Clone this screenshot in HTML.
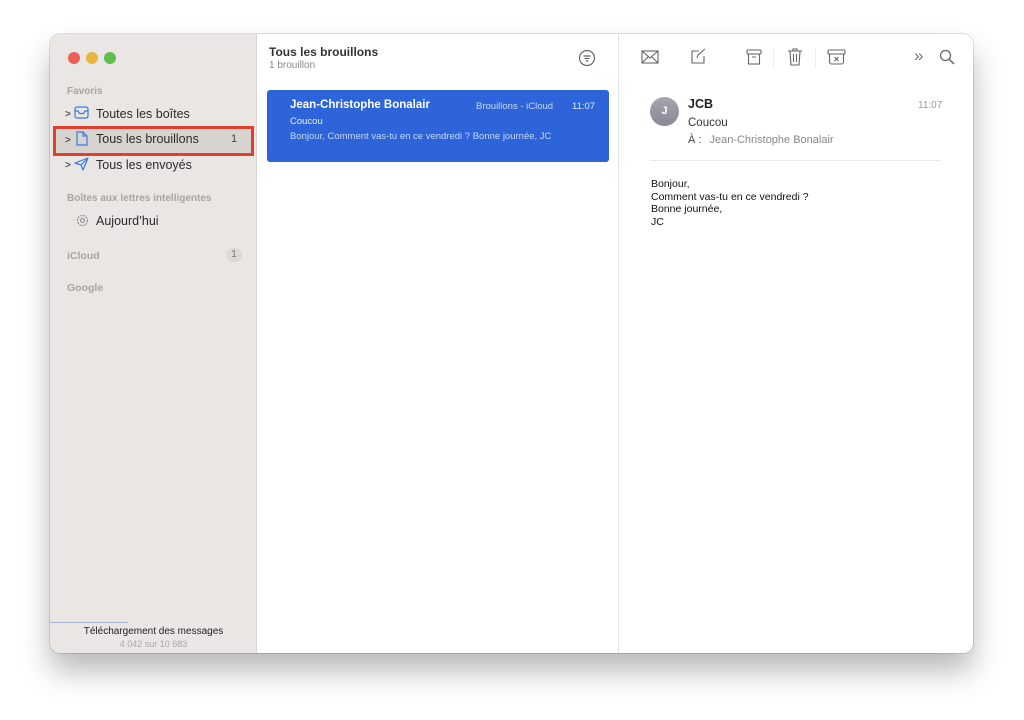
<!DOCTYPE html>
<html><head><meta charset="utf-8"><style>
*{box-sizing:border-box;margin:0;padding:0}
body{width:1024px;height:720px;background:#fff;font-family:"Liberation Sans",sans-serif;position:relative;overflow:hidden}
.win{position:absolute;left:50px;top:34px;width:923px;height:619px;border-radius:10px;background:#fff;box-shadow:0 18px 30px rgba(0,0,0,.28),0 0 0 1px rgba(0,0,0,.12);overflow:hidden}
.side{position:absolute;left:0;top:0;width:207px;height:619px;background:#e9e6e3;border-right:1px solid #d8d6d3}
.mid{position:absolute;left:207px;top:0;width:362px;height:619px;background:#fff;border-right:1px solid #e2e2e2}
.right{position:absolute;left:569px;top:0;width:354px;height:619px;background:#fff}
.dot{position:absolute;top:18px;width:12px;height:12px;border-radius:50%}
.t{position:absolute;white-space:nowrap}
.sec{font-size:10px;color:#a8a5a2;font-weight:bold}
.item{font-size:12.5px;color:#2b2b2b}
.chev{font-size:10px;color:#555;font-weight:bold}
svg{position:absolute}
</style></head><body>
<div class="win">
 <div class="side">
  <div class="dot" style="left:18px;background:#ec5f57"></div>
  <div class="dot" style="left:36px;background:#e8b540"></div>
  <div class="dot" style="left:54px;background:#5fbf4c"></div>
  <div class="t sec" style="left:17px;top:52px">Favoris</div>
  <div class="t chev" style="left:15px;top:75px">&gt;</div>
  <svg style="left:24px;top:72px" width="15" height="13" viewBox="0 0 15 13"><rect x="1" y="1" width="13" height="11" rx="2" fill="none" stroke="#3b7be0" stroke-width="1.2"/><path d="M1 5h3l1.5 2.5h4L11 5h3" fill="none" stroke="#3b7be0" stroke-width="1.2"/></svg>
  <div class="t item" style="left:46px;top:73px">Toutes les boîtes</div>
  <div style="position:absolute;left:3px;top:92px;width:201px;height:30px;border:3px solid #e0402c;background:#d6d3d0"></div>
  <div class="t chev" style="left:15px;top:101px">&gt;</div>
  <svg style="left:26px;top:97px" width="12" height="15" viewBox="0 0 12 15"><path d="M1 1h6l4 4v9H1z M7 1v4h4" fill="none" stroke="#3b7be0" stroke-width="1.2"/></svg>
  <div class="t item" style="left:46px;top:98px">Tous les brouillons</div>
  <div class="t" style="left:181px;top:99px;font-size:11px;color:#444">1</div>
  <div class="t chev" style="left:15px;top:126px">&gt;</div>
  <svg style="left:24px;top:123px" width="15" height="14" viewBox="0 0 15 14"><path d="M1 6L14 1L9 13L7 8z M7 8L14 1" fill="none" stroke="#3b7be0" stroke-width="1.2" stroke-linejoin="round"/></svg>
  <div class="t item" style="left:46px;top:124px">Tous les envoyés</div>
  <div class="t sec" style="left:17px;top:159px">Boîtes aux lettres intelligentes</div>
  <svg style="left:26px;top:180px" width="13" height="13" viewBox="0 0 13 13"><circle cx="6.5" cy="6.5" r="5" fill="none" stroke="#888" stroke-width="1.1" stroke-dasharray="2 1"/><circle cx="6.5" cy="6.5" r="2" fill="none" stroke="#888"/></svg>
  <div class="t item" style="left:46px;top:180px">Aujourd’hui</div>
  <div class="t sec" style="left:17px;top:216px;font-size:10.5px">iCloud</div>
  <div style="position:absolute;left:176px;top:214px;width:16px;height:14px;border-radius:7px;background:#dcd9d6;font-size:10px;color:#777;text-align:center;line-height:14px">1</div>
  <div class="t sec" style="left:17px;top:248px;font-size:10.5px">Google</div>
  <div style="position:absolute;left:0;top:588px;width:78px;height:1px;background:#a9b5d8"></div>
  <div class="t" style="left:0;width:207px;text-align:center;top:592px;font-size:10px;color:#222">Téléchargement des messages</div>
  <div class="t" style="left:0;width:207px;text-align:center;top:605px;font-size:9px;color:#aaa">4 042 sur 10 683</div>
 </div>
 <div class="mid">
  <div class="t" style="left:12px;top:11px;font-size:12px;font-weight:bold;color:#333">Tous les brouillons</div>
  <div class="t" style="left:12px;top:26px;font-size:10px;color:#888">1 brouillon</div>
  <svg style="left:321px;top:15px" width="18" height="18" viewBox="0 0 18 18"><circle cx="9" cy="9" r="7.5" fill="none" stroke="#666" stroke-width="1.2"/><path d="M5.5 7h7M6.5 9.5h5M7.7 12h2.6" stroke="#666" stroke-width="1.2"/></svg>
  <div style="position:absolute;left:10px;top:56px;width:342px;height:72px;background:#2e64d9;border-radius:3px"></div>
  <div class="t" style="left:33px;top:65px;font-size:11.5px;font-weight:bold;color:#fff">Jean-Christophe Bonalair</div>
  <div class="t" style="left:219px;top:67px;font-size:9.5px;color:#c9d6f5">Brouillons - iCloud</div>
  <div class="t" style="left:315px;top:67px;font-size:9.5px;color:#e4ebfb">11:07</div>
  <div class="t" style="left:33px;top:82px;font-size:9.5px;color:#e8eefc">Coucou</div>
  <div class="t" style="left:33px;top:97px;font-size:9.5px;color:#c9d6f5">Bonjour, Comment vas-tu en ce vendredi ? Bonne journée, JC</div>
 </div>
 <div class="right">
  <svg style="left:22px;top:16px" width="18" height="14" viewBox="0 0 18 14"><rect x="1" y="1" width="16" height="12" fill="none" stroke="#666" stroke-width="1.1"/><path d="M1 1l8 7 8-7M1 13l6-6M17 13l-6-6" fill="none" stroke="#666" stroke-width="1.1"/></svg>
  <svg style="left:71px;top:14px" width="17" height="17" viewBox="0 0 17 17"><path d="M9 3H2v12h12V8" fill="none" stroke="#666" stroke-width="1.1"/><path d="M7 10l1-3 7-6" fill="none" stroke="#666" stroke-width="1.1"/></svg>
  <svg style="left:127px;top:15px" width="16" height="16" viewBox="0 0 16 16"><rect x="1" y="1" width="14" height="4" rx="1" fill="none" stroke="#666" stroke-width="1.1"/><rect x="2.5" y="5" width="11" height="10" fill="none" stroke="#666" stroke-width="1.1"/><path d="M6 8h4" stroke="#666" stroke-width="1.1"/></svg>
  <div style="position:absolute;left:154px;top:14px;width:1px;height:20px;background:#eee"></div>
  <svg style="left:168px;top:13px" width="16" height="19" viewBox="0 0 16 19"><path d="M1 4h14M6 4V2h4v2M3 4l1 14h8l1-14M6.5 7v8M9.5 7v8" fill="none" stroke="#666" stroke-width="1.1"/></svg>
  <div style="position:absolute;left:196px;top:14px;width:1px;height:20px;background:#eee"></div>
  <svg style="left:208px;top:15px" width="19" height="16" viewBox="0 0 19 16"><rect x="1" y="1" width="17" height="4" rx="1" fill="none" stroke="#666" stroke-width="1.1"/><path d="M2.5 5v8a2 2 0 002 2h10a2 2 0 002-2V5M7.5 8l4 4M11.5 8l-4 4" fill="none" stroke="#666" stroke-width="1.1"/></svg>
  <div class="t" style="left:295px;top:12px;font-size:17px;color:#777">»</div>
  <svg style="left:320px;top:15px" width="16" height="16" viewBox="0 0 16 16"><circle cx="6.5" cy="6.5" r="5" fill="none" stroke="#666" stroke-width="1.3"/><path d="M10 10l5 5" stroke="#666" stroke-width="1.5"/></svg>
  <div style="position:absolute;left:31px;top:63px;width:29px;height:29px;border-radius:50%;background:linear-gradient(#a4a7b0,#878a94);color:#fff;font-size:11px;font-weight:bold;text-align:center;line-height:29px">J</div>
  <div class="t" style="left:69px;top:63px;font-size:12.5px;font-weight:bold;color:#222">JCB</div>
  <div class="t" style="left:299px;top:66px;font-size:10px;color:#999">11:07</div>
  <div class="t" style="left:69px;top:83px;font-size:11.5px;color:#333">Coucou</div>
  <div class="t" style="left:69px;top:100px;font-size:11px;color:#444">À :<span style="color:#888;margin-left:8px">Jean-Christophe Bonalair</span></div>
  <div style="position:absolute;left:31px;top:126px;width:291px;height:1px;background:#e8e8e8"></div>
  <div class="t" style="left:32px;top:144px;font-size:10.5px;color:#111;line-height:12.7px">Bonjour,<br>Comment vas-tu en ce vendredi ?<br>Bonne journée,<br>JC</div>
 </div>
</div>
</body></html>
